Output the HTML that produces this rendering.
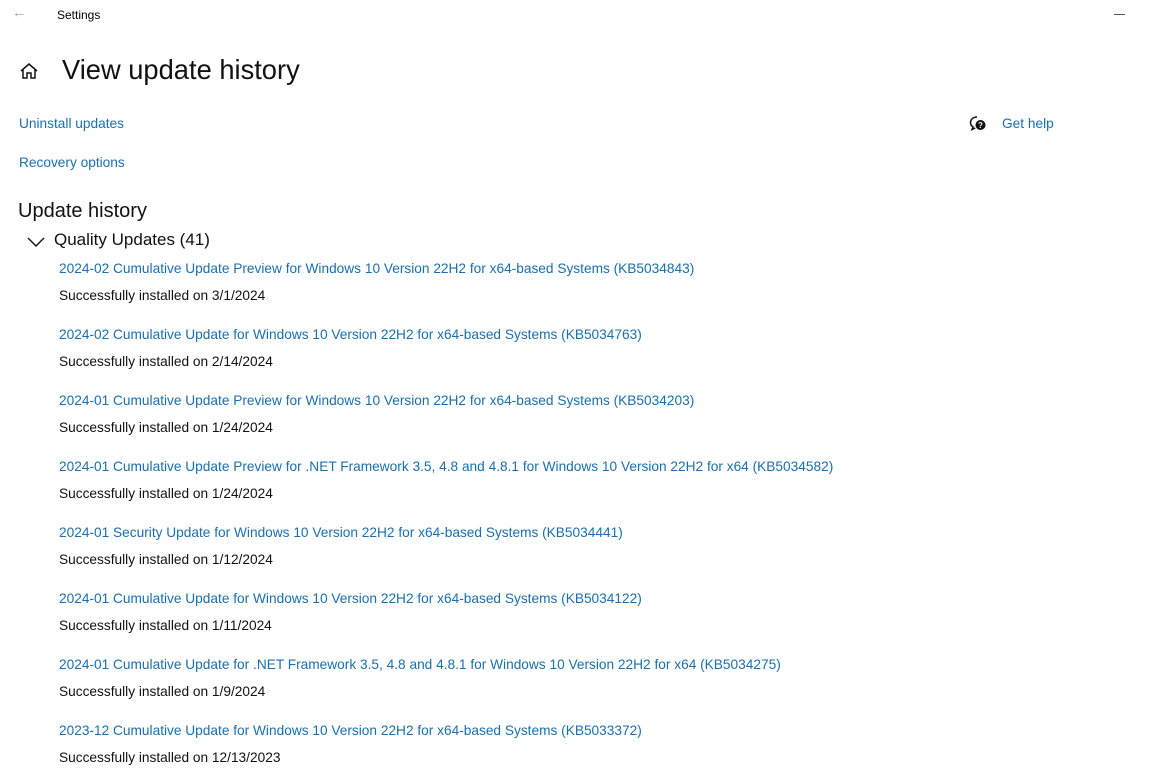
<!DOCTYPE html>
<html><head><style>
body{margin:0;width:1158px;height:773px;background:#fff;font-family:"Liberation Sans",sans-serif;position:relative;overflow:hidden;color:#000}
.a{position:absolute;white-space:nowrap}
.l{color:#1a6fae;font-size:13.7px}
.s{font-size:13.7px;color:#111}
</style></head><body>
<div class="a" style="left:12px;top:4px;color:#aaa;font-size:15px">&#8592;</div>
<div class="a" style="left:57px;top:8px;font-size:12px">Settings</div>
<div class="a" style="left:1114px;top:14px;width:11px;height:1px;background:#555"></div>
<svg class="a" style="left:19px;top:61px" width="20" height="20" viewBox="0 0 20 20" fill="none" stroke="#111" stroke-width="1.5"><path d="M2 10L10 3L18 10M4 8.5V17H8V12H12V17H16V8.5"/></svg>
<div class="a" style="left:62px;top:54px;font-size:27.3px;color:#111">View update history</div>
<div class="a l" style="left:19px;top:116px">Uninstall updates</div>
<div class="a l" style="left:19px;top:155px">Recovery options</div>
<svg class="a" style="left:969px;top:115px" width="18" height="18" viewBox="0 0 18 18"><path d="M8 2C4 2 1.5 4.5 1.5 7.5c0 2 1 3.5 2.5 4.3L3 14.5l3.2-1.6" fill="none" stroke="#111" stroke-width="1.5"/><circle cx="11.5" cy="10" r="5" fill="#111"/><text x="11.5" y="13" font-size="8" fill="#fff" text-anchor="middle" font-family="Liberation Sans" font-weight="bold">?</text></svg>
<div class="a l" style="left:1002px;top:116px">Get help</div>
<div class="a" style="left:18px;top:200px;font-size:20px;color:#111">Update history</div>
<svg class="a" style="left:27px;top:236px" width="18" height="12" viewBox="0 0 18 12"><path d="M1 2L9 10L17 2" fill="none" stroke="#111" stroke-width="1.4"/></svg>
<div class="a" style="left:54px;top:230px;font-size:17px;color:#111">Quality Updates (41)</div>
<div class="a l" style="left:59px;top:261px">2024-02 Cumulative Update Preview for Windows 10 Version 22H2 for x64-based Systems (KB5034843)</div>
<div class="a s" style="left:59px;top:288px">Successfully installed on 3/1/2024</div>
<div class="a l" style="left:59px;top:327px">2024-02 Cumulative Update for Windows 10 Version 22H2 for x64-based Systems (KB5034763)</div>
<div class="a s" style="left:59px;top:354px">Successfully installed on 2/14/2024</div>
<div class="a l" style="left:59px;top:393px">2024-01 Cumulative Update Preview for Windows 10 Version 22H2 for x64-based Systems (KB5034203)</div>
<div class="a s" style="left:59px;top:420px">Successfully installed on 1/24/2024</div>
<div class="a l" style="left:59px;top:459px">2024-01 Cumulative Update Preview for .NET Framework 3.5, 4.8 and 4.8.1 for Windows 10 Version 22H2 for x64 (KB5034582)</div>
<div class="a s" style="left:59px;top:486px">Successfully installed on 1/24/2024</div>
<div class="a l" style="left:59px;top:525px">2024-01 Security Update for Windows 10 Version 22H2 for x64-based Systems (KB5034441)</div>
<div class="a s" style="left:59px;top:552px">Successfully installed on 1/12/2024</div>
<div class="a l" style="left:59px;top:591px">2024-01 Cumulative Update for Windows 10 Version 22H2 for x64-based Systems (KB5034122)</div>
<div class="a s" style="left:59px;top:618px">Successfully installed on 1/11/2024</div>
<div class="a l" style="left:59px;top:657px">2024-01 Cumulative Update for .NET Framework 3.5, 4.8 and 4.8.1 for Windows 10 Version 22H2 for x64 (KB5034275)</div>
<div class="a s" style="left:59px;top:684px">Successfully installed on 1/9/2024</div>
<div class="a l" style="left:59px;top:723px">2023-12 Cumulative Update for Windows 10 Version 22H2 for x64-based Systems (KB5033372)</div>
<div class="a s" style="left:59px;top:750px">Successfully installed on 12/13/2023</div>
</body></html>
